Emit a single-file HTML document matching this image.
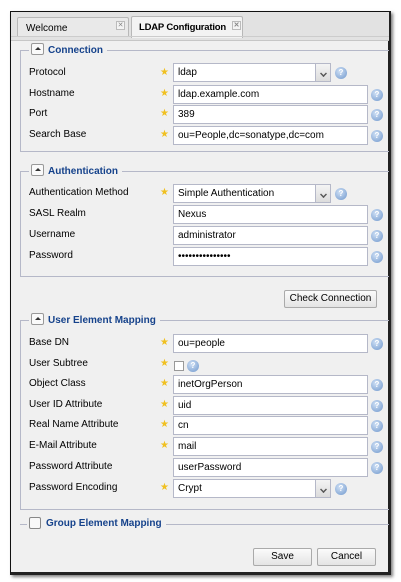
<!DOCTYPE html>
<html><head><meta charset="utf-8"><style>
*{box-sizing:border-box;margin:0;padding:0}
body{width:401px;height:582px;background:#fff;position:relative;overflow:hidden;font-family:"Liberation Sans",Verdana,sans-serif;font-size:10px;color:#000}
.frame{position:absolute;left:10px;top:11px;width:381px;height:564px;border:1px solid #111;border-right:3px solid #222;border-bottom:3px solid #222;background:#f0f0f0;box-shadow:2px 2px 3px rgba(0,0,0,.5)}
.strip{position:absolute;left:11px;top:12px;width:378px;height:29px;background:#e2e2e2;border-bottom:1px solid #c6c6c6}
.tab{position:absolute;top:17px;height:20px;border:1px solid #b8b8b8;border-bottom:none;background:#e9e9e9;padding:5px 8px;font-size:10px;white-space:nowrap;border-radius:2px 2px 0 0}
.tab.a{background:#f3f3f3;font-weight:bold;height:22px;top:16px;padding-left:7px;font-size:9.5px;letter-spacing:-0.2px}
.x{position:absolute;top:3px;width:9px;height:9px;border:1px solid #bbb;font-size:7px;line-height:7px;text-align:center;color:#888;background:#f4f4f4}
.ln{position:absolute;left:11px;top:36px;width:378px;height:1px;background:#ccc}
.fs{position:absolute;left:20px;width:369px;border:1px solid #b5b8c8;border-right:none}
.lg{position:absolute;left:29px;height:14px;background:#f0f0f0;padding:0 4px 0 2px;color:#15428b;font-weight:bold;font-size:10px;line-height:14px;white-space:nowrap}
.lg .t{display:inline-block;width:13px;height:12px;border:1px solid #999;border-radius:2px;background:#fafafa;vertical-align:-2px;margin-right:4px;position:relative}
.lg .t:after{content:"";position:absolute;left:3px;top:3px;border:3px solid transparent;border-bottom:3px solid #333;border-top:none}
.lb{position:absolute;left:29px;font-size:10px;line-height:14px;white-space:nowrap}
.st{position:absolute;left:160px;color:#f0c020;font-size:10px;line-height:12px}
.in{position:absolute;left:173px;width:195px;height:19px;border:1px solid #b5b8c8;background:#fff;padding:3px 4px;font-size:10px;line-height:12px;white-space:nowrap}
.in.s{width:158px}
.in.s:after{content:"";position:absolute;right:0;top:0;width:14px;height:17px;background:linear-gradient(#f4f4f4,#dcdcdc);border-left:1px solid #b5b8c8}
.in.s:before{content:"";position:absolute;right:3px;top:6px;width:5px;height:5px;border-right:2px solid #555;border-bottom:2px solid #555;transform:rotate(45deg) scale(.7);z-index:2}
.h{position:absolute;width:12px;height:12px;border-radius:50%;background:radial-gradient(circle at 40% 35%,#cfe0f5,#6f97cc);color:#fff;font-size:8px;line-height:12px;text-align:center;font-weight:bold}
.btn{position:absolute;height:18px;border:1px solid #aaa;border-radius:2px;background:linear-gradient(#fbfbfb,#e4e4e4);font-size:10px;text-align:center;line-height:16px;white-space:nowrap}
</style></head><body>
<div class="frame"></div>
<div class="strip"></div>
<div class="tab" style="left:17px;width:112px">Welcome<span class="x" style="left:98px">✕</span></div>
<div class="tab a" style="left:131px;width:112px">LDAP Configuration<span class="x" style="left:100px;top:4px">✕</span></div>
<div class="ln"></div>

<div class="fs" style="top:50px;height:102px"></div>
<div class="lg" style="top:43px"><span class="t"></span>Connection</div>
<div class="lb" style="top:66px">Protocol</div><div class="st" style="top:67px">★</div><div class="in s" style="top:63px">ldap</div><div class="h" style="left:335px;top:67px">?</div>
<div class="lb" style="top:87px">Hostname</div><div class="st" style="top:88px">★</div><div class="in" style="top:85px">ldap.example.com</div><div class="h" style="left:371px;top:89px">?</div>
<div class="lb" style="top:107px">Port</div><div class="st" style="top:108px">★</div><div class="in" style="top:105px">389</div><div class="h" style="left:371px;top:109px">?</div>
<div class="lb" style="top:128px">Search Base</div><div class="st" style="top:129px">★</div><div class="in" style="top:126px">ou=People,dc=sonatype,dc=com</div><div class="h" style="left:371px;top:130px">?</div>

<div class="fs" style="top:171px;height:106px"></div>
<div class="lg" style="top:164px"><span class="t"></span>Authentication</div>
<div class="lb" style="top:186px">Authentication Method</div><div class="st" style="top:187px">★</div><div class="in s" style="top:184px">Simple Authentication</div><div class="h" style="left:335px;top:188px">?</div>
<div class="lb" style="top:207px">SASL Realm</div><div class="in" style="top:205px">Nexus</div><div class="h" style="left:371px;top:209px">?</div>
<div class="lb" style="top:228px">Username</div><div class="in" style="top:226px">administrator</div><div class="h" style="left:371px;top:230px">?</div>
<div class="lb" style="top:249px">Password</div><div class="in" style="top:247px">•••••••••••••••</div><div class="h" style="left:371px;top:251px">?</div>

<div class="btn" style="left:284px;top:290px;width:93px">Check Connection</div>

<div class="fs" style="top:320px;height:190px"></div>
<div class="lg" style="top:313px"><span class="t"></span>User Element Mapping</div>
<div class="lb" style="top:336px">Base DN</div><div class="st" style="top:337px">★</div><div class="in" style="top:334px">ou=people</div><div class="h" style="left:371px;top:338px">?</div>
<div class="lb" style="top:357px">User Subtree</div><div class="st" style="top:358px">★</div><div style="position:absolute;left:174px;top:361px;width:10px;height:10px;border:1px solid #999;background:#fff"></div><div class="h" style="left:187px;top:360px">?</div>
<div class="lb" style="top:377px">Object Class</div><div class="st" style="top:378px">★</div><div class="in" style="top:375px">inetOrgPerson</div><div class="h" style="left:371px;top:379px">?</div>
<div class="lb" style="top:398px">User ID Attribute</div><div class="st" style="top:399px">★</div><div class="in" style="top:396px">uid</div><div class="h" style="left:371px;top:400px">?</div>
<div class="lb" style="top:418px">Real Name Attribute</div><div class="st" style="top:419px">★</div><div class="in" style="top:416px">cn</div><div class="h" style="left:371px;top:420px">?</div>
<div class="lb" style="top:439px">E-Mail Attribute</div><div class="st" style="top:440px">★</div><div class="in" style="top:437px">mail</div><div class="h" style="left:371px;top:441px">?</div>
<div class="lb" style="top:460px">Password Attribute</div><div class="in" style="top:458px">userPassword</div><div class="h" style="left:371px;top:462px">?</div>
<div class="lb" style="top:481px">Password Encoding</div><div class="st" style="top:482px">★</div><div class="in s" style="top:479px">Crypt</div><div class="h" style="left:335px;top:483px">?</div>

<div style="position:absolute;left:20px;top:524px;width:369px;height:1px;background:#b5b8c8"></div>
<div class="lg" style="top:517px;left:27px"><span style="display:inline-block;width:12px;height:12px;border:1px solid #888;border-radius:2px;background:#f8f8f8;vertical-align:-3px;margin-right:5px"></span>Group Element Mapping</div>

<div class="btn" style="left:253px;top:548px;width:59px">Save</div>
<div class="btn" style="left:317px;top:548px;width:59px">Cancel</div>
</body></html>
